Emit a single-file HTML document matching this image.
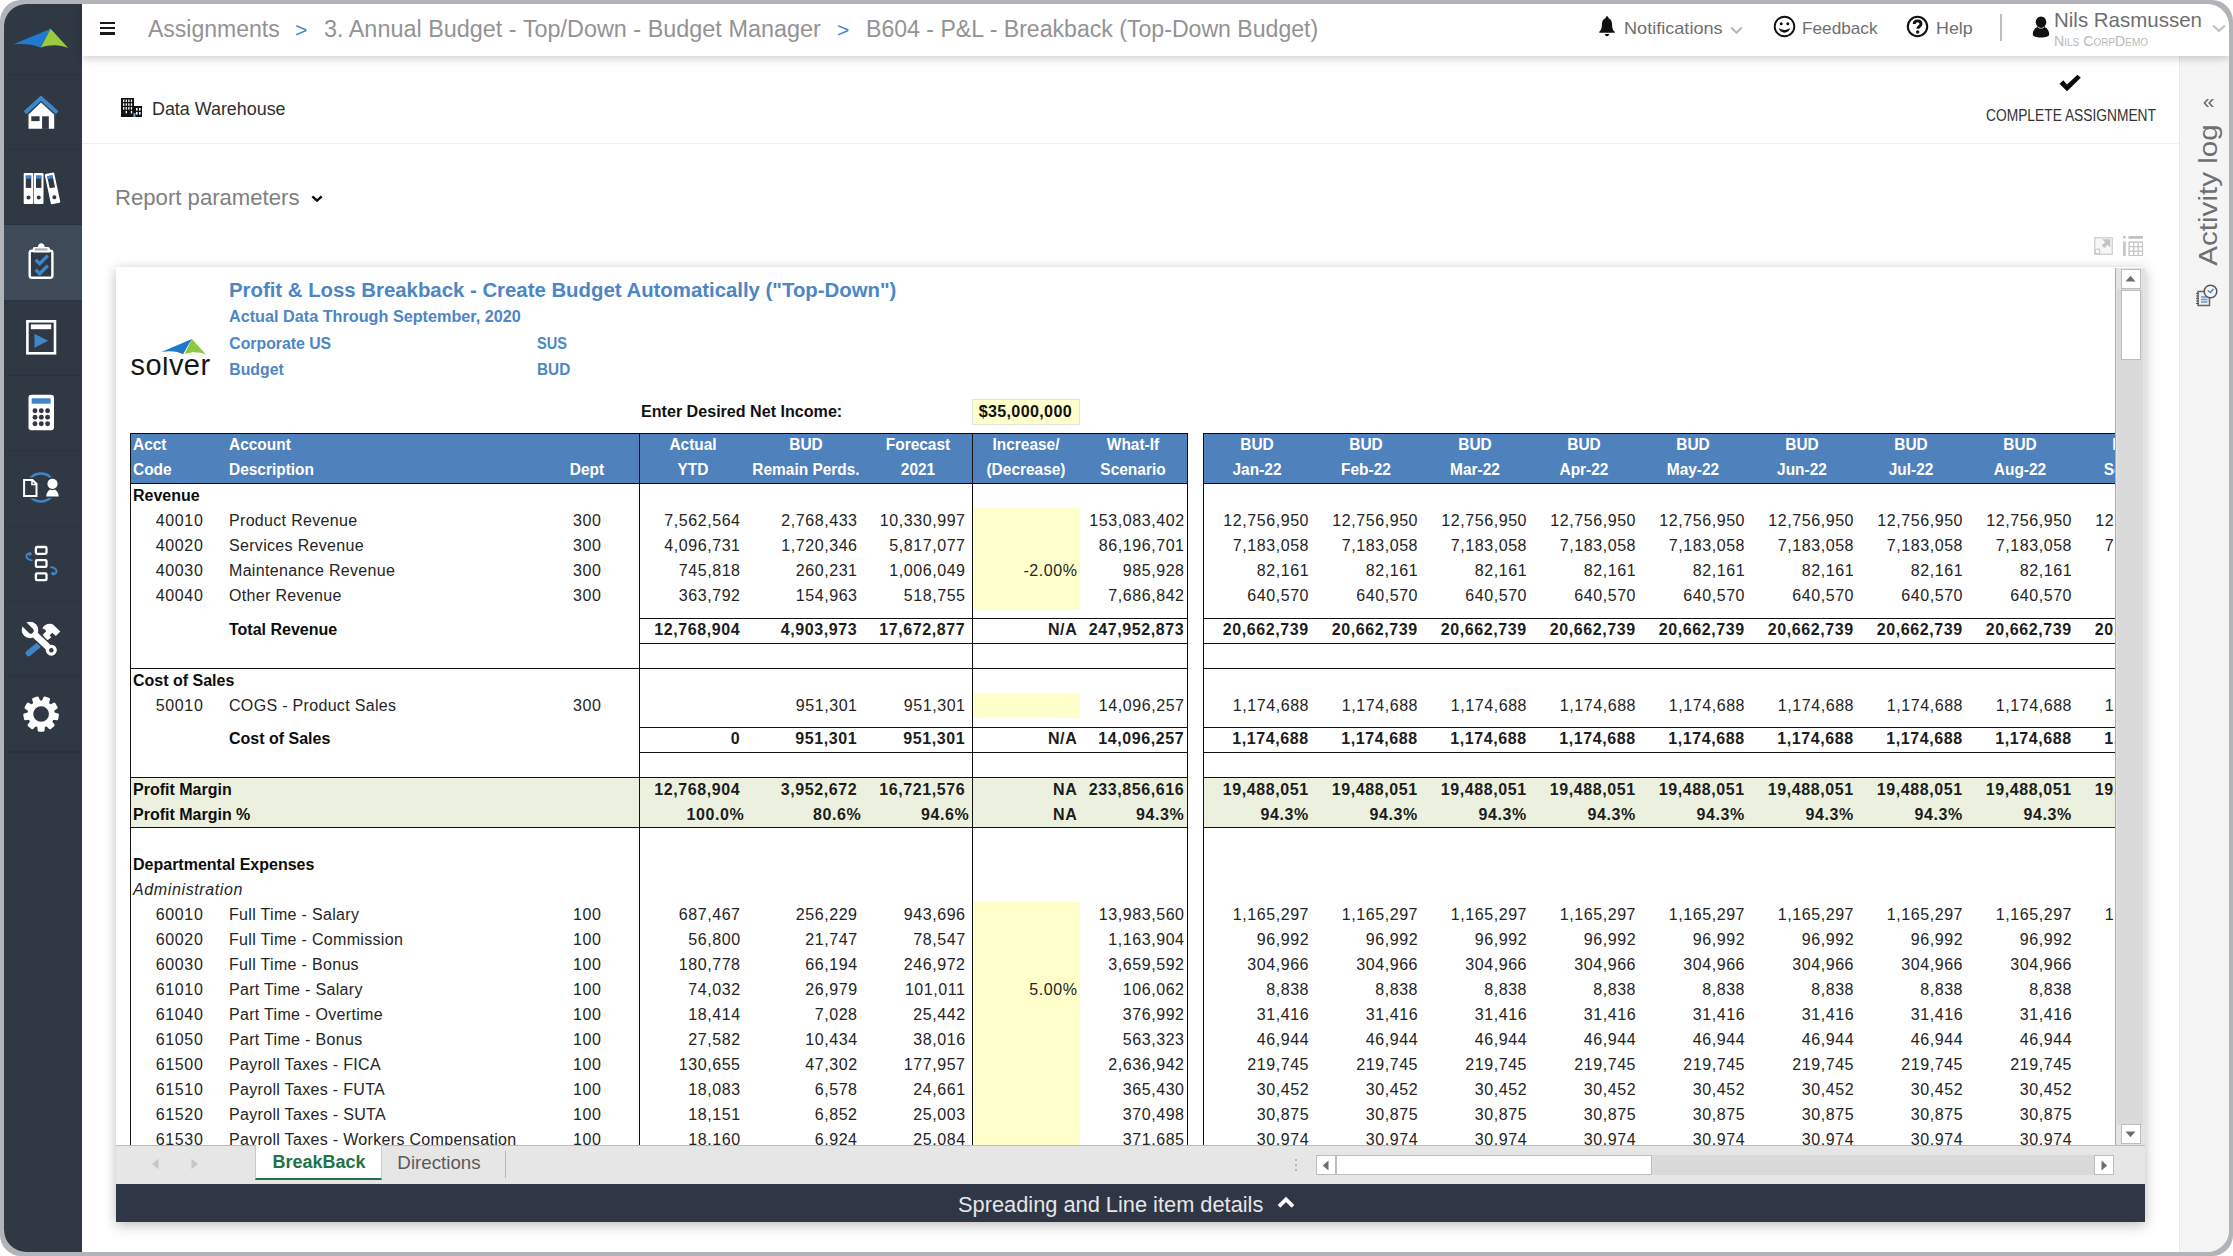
<!DOCTYPE html>
<html lang="en"><head><meta charset="utf-8"><title>B604 - P&amp;L - Breakback (Top-Down Budget)</title>
<style>
html,body{margin:0;padding:0;background:#fff;}
body{width:2233px;height:1256px;position:relative;overflow:hidden;font-family:"Liberation Sans",sans-serif;}
.a{position:absolute;box-sizing:border-box;}
.t{white-space:pre;}
#frame{left:0;top:0;width:2233px;height:1256px;border-radius:21px;background:#b1b4b9;}
#clip{left:4px;top:4px;width:2225px;height:1248px;border-radius:22px;background:#fff;overflow:hidden;}
#in{left:-4px;top:-4px;width:2233px;height:1256px;}
svg{position:absolute;overflow:visible;}
</style></head><body>
<div class="a" id="frame"><div class="a" id="clip"><div class="a" id="in">

<div class="a" style="left:4px;top:4px;width:78px;height:1248px;background:#2f3843;"></div>
<div class="a" style="left:4px;top:225.3px;width:78px;height:74.6px;background:#3e4a58;"></div>
<div class="a" style="left:4px;top:73.7px;width:78px;height:1.2px;background:#2b333d;"></div>
<div class="a" style="left:4px;top:149px;width:78px;height:1.2px;background:#2b333d;"></div>
<div class="a" style="left:4px;top:224.3px;width:78px;height:1.2px;background:#2b333d;"></div>
<div class="a" style="left:4px;top:299.6px;width:78px;height:1.2px;background:#2b333d;"></div>
<div class="a" style="left:4px;top:374.9px;width:78px;height:1.2px;background:#2b333d;"></div>
<div class="a" style="left:4px;top:450.2px;width:78px;height:1.2px;background:#2b333d;"></div>
<div class="a" style="left:4px;top:525.5px;width:78px;height:1.2px;background:#2b333d;"></div>
<div class="a" style="left:4px;top:600.8px;width:78px;height:1.2px;background:#2b333d;"></div>
<div class="a" style="left:4px;top:676.1px;width:78px;height:1.2px;background:#2b333d;"></div>
<div class="a" style="left:4px;top:751.4px;width:78px;height:1.2px;background:#2b333d;"></div>
<div class="a" style="left:2179px;top:56px;width:50px;height:1196px;background:#f5f5f5;border-left:1px solid #e9e9e9;"></div>
<div class="a" style="left:82px;top:143px;width:2097px;height:1px;background:#efefef;"></div>
<div class="a" style="left:82px;top:4px;width:2147px;height:52px;background:#fff;box-shadow:0 2px 9px rgba(0,0,0,0.22);"></div>
<div class="a" style="left:100px;top:21.5px;width:14.5px;height:2.7px;background:#1a1a1a;"></div>
<div class="a" style="left:100px;top:26.8px;width:14.5px;height:2.7px;background:#1a1a1a;"></div>
<div class="a" style="left:100px;top:32.1px;width:14.5px;height:2.7px;background:#1a1a1a;"></div>
<div class="a t " style="top:14.0px;font-size:23px;line-height:30px;color:#939393;left:148.00px;">Assignments</div>
<div class="a t " style="top:15.5px;font-size:21px;line-height:27px;color:#3a87d6;letter-spacing:0px;left:295.00px;">&gt;</div>
<div class="a t " style="top:14.0px;font-size:23px;line-height:30px;color:#939393;left:323.50px;transform:scaleX(1.018);transform-origin:left center;">3. Annual Budget - Top/Down - Budget Manager</div>
<div class="a t " style="top:15.5px;font-size:21px;line-height:27px;color:#3a87d6;left:837.00px;">&gt;</div>
<div class="a t " style="top:14.0px;font-size:23px;line-height:30px;color:#939393;left:865.50px;transform:scaleX(1.004);transform-origin:left center;">B604 - P&amp;L - Breakback (Top-Down Budget)</div>
<div class="a t " style="top:18.2px;font-size:17px;line-height:22px;color:#6f6f6f;left:1623.60px;transform:scaleX(1.065);transform-origin:left center;">Notifications</div>
<div class="a t " style="top:18.2px;font-size:17px;line-height:22px;color:#6f6f6f;left:1801.50px;transform:scaleX(1.012);transform-origin:left center;">Feedback</div>
<div class="a t " style="top:18.2px;font-size:17px;line-height:22px;color:#6f6f6f;left:1935.50px;transform:scaleX(1.05);transform-origin:left center;">Help</div>
<div class="a" style="left:2000px;top:14px;width:1.5px;height:27px;background:#bdbdbd;"></div>
<div class="a t " style="top:6.1px;font-size:21px;line-height:27px;color:#6f6f6f;left:2054.00px;transform:scaleX(0.975);transform-origin:left center;">Nils Rasmussen</div>
<div class="a t " style="top:31.5px;font-size:14.2px;line-height:18px;color:#b9b9b9;left:2054.00px;transform:scaleX(1.0);transform-origin:left center;"><span style="font-variant:small-caps">Nils CorpDemo</span></div>
<svg style="left:1597.500px;top:15px" width="18" height="23" viewBox="0 0 20 24" preserveAspectRatio="none"><path d="M10 1.2c-.9 0-1.5.7-1.5 1.5v.5C5.8 4 4.4 6.6 4.4 9.6c0 4.6-1.4 6.5-3 8v1h17.2v-1c-1.600-1.500-3-3.400-3-8 0-3-1.400-5.600-4.100-6.400v-.5c0-.8-.6-1.500-1.500-1.500zM7.600 19.800c0 1.300 1.100 2.400 2.400 2.400s2.400-1.100 2.400-2.400z" fill="#111"/></svg>
<svg style="left:1730px;top:26px" width="13" height="9" viewBox="0 0 13 9"><path d="M1.200 1.500l5.300 5.300 5.300-5.300" fill="none" stroke="#b9b9b9" stroke-width="2.200"/></svg>
<svg style="left:1773px;top:15px" width="23" height="23" viewBox="0 0 23 23"><circle cx="11.500" cy="11.500" r="9.800" fill="none" stroke="#111" stroke-width="1.900"/><circle cx="8.200" cy="8.800" r="1.500" fill="#111"/><circle cx="14.800" cy="8.800" r="1.500" fill="#111"/><path d="M5.600 12.800c1.100 3.300 3.300 4.900 5.900 4.900s4.800-1.600 5.900-4.900c-1.800 1.500-3.700 2.100-5.900 2.100s-4.100-.6-5.900-2.100z" fill="#111"/></svg>
<svg style="left:1906px;top:15px" width="23" height="23" viewBox="0 0 23 23"><circle cx="11.500" cy="11.500" r="9.700" fill="none" stroke="#111" stroke-width="2.100"/><path d="M8.200 9.100c0-2 1.500-3.200 3.400-3.200 2 0 3.400 1.200 3.400 3 0 2.300-3.200 2.500-3.200 4.900" fill="none" stroke="#111" stroke-width="2.900"/><circle cx="11.700" cy="17" r="1.700" fill="#111"/></svg>
<svg style="left:2032px;top:16px" width="18" height="22" viewBox="0 0 18 22"><ellipse cx="9" cy="6.200" rx="5.300" ry="5.800" fill="#111"/><path d="M.8 18.500c0-4.500 3-7 4.800-7.400.8 1 2 1.500 3.400 1.500s2.600-.5 3.400-1.500c1.800.4 4.800 2.900 4.800 7.400 0 1.800-3.500 3-8.200 3s-8.200-1.200-8.200-3z" fill="#111"/></svg>
<svg style="left:2212px;top:24px" width="14" height="9" viewBox="0 0 14 9"><path d="M1.200 1.500l5.800 5.500 5.800-5.500" fill="none" stroke="#c4c4c4" stroke-width="2.300"/></svg>
<svg style="left:121px;top:98px" width="21" height="19" viewBox="0 0 21 19"><path d="M0 0h13v8h8v11H0z" fill="#111"/><g fill="#fff"><rect x="2" y="1.500" width="1.300" height="2.500"/><rect x="4.600" y="1.500" width="1.300" height="2.500"/><rect x="7.200" y="1.500" width="1.300" height="2.500"/><rect x="9.800" y="1.500" width="1.300" height="2.500"/><rect x="2" y="5.300" width="1.300" height="2.500"/><rect x="4.600" y="5.300" width="1.300" height="2.500"/><rect x="7.200" y="5.300" width="1.300" height="2.500"/><rect x="9.800" y="5.300" width="1.300" height="2.500"/><rect x="2" y="9.100" width="1.300" height="2.500"/><rect x="4.600" y="9.100" width="1.300" height="2.500"/><rect x="7.200" y="9.100" width="1.300" height="2.500"/><rect x="9.800" y="9.100" width="1.300" height="2.500"/><rect x="15" y="10" width="1.600" height="2.600"/><rect x="18" y="10" width="1.600" height="2.600"/><rect x="15" y="14" width="1.600" height="2.600"/><rect x="18" y="14" width="1.600" height="2.600"/><rect x="4.600" y="12.900" width="1.300" height="2.500"/><rect x="9.800" y="12.900" width="1.300" height="2.500"/></g><rect x="12.300" y="15" width="2.200" height="4" fill="#5b9bd5"/></svg>
<div class="a t " style="top:97.5px;font-size:17.5px;line-height:23px;color:#2e2e2e;left:151.60px;transform:scaleX(1.022);transform-origin:left center;">Data Warehouse</div>
<svg style="left:2058px;top:74px" width="24" height="18" viewBox="0 0 24 18"><path d="M1.500 9.800l3.800-3.500 3.700 4.200L19.500.8l3.300 3L9 17.300z" fill="#0b0b0b"/></svg>
<div class="a t " style="top:104.5px;font-size:16.3px;line-height:21px;color:#333;left:1570.50px;width:1000px;text-align:center;transform:scaleX(0.846);transform-origin:center center;">COMPLETE ASSIGNMENT</div>
<div class="a t " style="top:182.8px;font-size:22px;line-height:29px;color:#7f7f7f;left:115.30px;transform:scaleX(1.006);transform-origin:left center;">Report parameters</div>
<svg style="left:311px;top:195px" width="12" height="8" viewBox="0 0 12 8"><path d="M1.300 1.300l4.700 4.400 4.700-4.400" fill="none" stroke="#111" stroke-width="2.400"/></svg>
<div class="a t " style="top:86.5px;font-size:21px;line-height:27px;color:#666;left:1708.50px;width:1000px;text-align:center;">&laquo;</div>
<div class="a t" style="left:2208px;top:195px;width:0;height:0;"><div class="a t" style="left:-100px;top:-17px;width:200px;text-align:center;font-size:25.5px;line-height:34px;color:#707070;transform:rotate(-90deg) scaleX(1.16);transform-origin:center center;">Activity log</div></div>
<svg style="left:2195px;top:283px" width="24" height="24" viewBox="0 0 24 24"><path d="M3 8.500h11.500v14H3z" fill="#f1f1f1" stroke="#666" stroke-width="1.500"/><path d="M1 10.500h3M1 13h3M1 15.500h3M1 18h3M1 20.500h3" stroke="#555" stroke-width="1.100"/><path d="M6 14h6.500M6 16.500h6.500M6 19h6.500" stroke="#5b9bd5" stroke-width="1.300"/><circle cx="15.500" cy="8.500" r="6.300" fill="#f7f7f7" stroke="#555" stroke-width="1.500"/><path d="M12.800 7.500l2.700 2 3-3.500" fill="none" stroke="#3a87d6" stroke-width="1.500"/></svg>
<svg style="left:2094px;top:237px" width="19" height="18" viewBox="0 0 19 18"><rect x=".7" y=".7" width="17.600" height="16.600" fill="#f6f6f6" stroke="#d2d2d2" stroke-width="1.400"/><rect x="1.400" y="12.300" width="4.200" height="4.200" fill="#fff" stroke="#cdcdcd" stroke-width="1.200"/><path d="M16.300 2.200v8.300l-2.800-2.800-3.200 3.200-2.400-2.400 3.200-3.200L8.300 2.200z" fill="#c3c3c3"/></svg>
<svg style="left:2123px;top:236px" width="20" height="20" viewBox="0 0 20 20"><rect x="0" y="0" width="2.600" height="2.600" fill="#c8c8c8"/><rect x="5.400" y="0" width="14.600" height="2.800" fill="#c2c2c2"/><rect x="0" y="5.400" width="2.800" height="14.600" fill="#c8c8c8"/><rect x="5.400" y="5.400" width="14.600" height="14.600" fill="#c6c6c6"/><g fill="#fff"><rect x="6.800" y="6.800" width="3.200" height="3.200"/><rect x="11.300" y="6.800" width="3.200" height="3.200"/><rect x="15.800" y="6.800" width="3.200" height="3.200"/><rect x="6.800" y="11.300" width="3.200" height="3.200"/><rect x="11.300" y="11.300" width="3.200" height="3.200"/><rect x="15.800" y="11.300" width="3.200" height="3.200"/><rect x="6.800" y="15.800" width="3.200" height="3.200"/><rect x="11.300" y="15.800" width="3.200" height="3.200"/><rect x="15.800" y="15.800" width="3.200" height="3.200"/></g></svg>
<div class="a" style="left:116px;top:267px;width:2029px;height:955px;background:#fff;box-shadow:0 3px 12px rgba(0,0,0,0.27);"></div>
<div class="a" id="sheet" style="left:116px;top:268px;width:1999px;height:877px;overflow:hidden;background:#fff;"><div class="a" style="left:-116px;top:-268px;width:2233px;height:1256px;">
<div class="a t " style="top:276.1px;font-size:20.7px;line-height:27px;color:#4c86c6;font-weight:700;left:229.30px;transform:scaleX(0.984);transform-origin:left center;">Profit &amp; Loss Breakback - Create Budget Automatically ("Top-Down")</div>
<div class="a t " style="top:306.4px;font-size:15.8px;line-height:21px;color:#4c86c6;font-weight:700;left:229.30px;transform:scaleX(1.026);transform-origin:left center;">Actual Data Through September, 2020</div>
<div class="a t " style="top:332.9px;font-size:15.8px;line-height:21px;color:#4c86c6;font-weight:700;left:229.30px;transform:scaleX(1.0);transform-origin:left center;">Corporate US</div>
<div class="a t " style="top:332.9px;font-size:15.8px;line-height:21px;color:#4c86c6;font-weight:700;left:537.00px;transform:scaleX(0.92);transform-origin:left center;">SUS</div>
<div class="a t " style="top:359.3px;font-size:15.8px;line-height:21px;color:#4c86c6;font-weight:700;left:229.30px;transform:scaleX(1.0);transform-origin:left center;">Budget</div>
<div class="a t " style="top:359.3px;font-size:15.8px;line-height:21px;color:#4c86c6;font-weight:700;left:537.00px;transform:scaleX(0.97);transform-origin:left center;">BUD</div>
<svg style="left:0px;top:0px" width="230" height="400" viewBox="0 0 230 400"><path d="M161.400 352L191.900 339 183 354.200C177.500 350.800 169 350.600 161.400 352z" fill="#1f78c8"/><path d="M191.900 339L206 354.600C199 351.600 192 351.600 184.800 354.100z" fill="#8dc63f"/></svg>
<div class="a" style="left:125px;top:357.300px;width:95px;height:30px;overflow:hidden;"><div class="a t" style="left:5.500px;top:-11.100px;font-size:29px;line-height:38px;color:#161616;letter-spacing:0.45px;">solver</div></div>
<div class="a t " style="top:401.0px;font-size:16.1px;line-height:21px;color:#111;font-weight:700;left:641.00px;">Enter Desired Net Income:</div>
<div class="a" style="left:972px;top:399px;width:108px;height:26px;background:#ffffcc;border:1px solid #dfe3e6;"></div>
<div class="a t " style="top:401.0px;font-size:16.1px;line-height:21px;color:#111;font-weight:700;letter-spacing:0.35px;right:1161.00px;">$35,000,000</div>
<div class="a" style="left:130px;top:433px;width:1058px;height:51px;background:#4f81bd;"></div>
<div class="a" style="left:1203px;top:433px;width:1030px;height:51px;background:#4f81bd;"></div>
<div class="a" style="left:130px;top:777px;width:1058px;height:50px;background:#ebf1de;"></div>
<div class="a" style="left:1203px;top:777px;width:1030px;height:50px;background:#ebf1de;"></div>
<div class="a" style="left:973px;top:508px;width:107px;height:102px;background:#ffffcc;"></div>
<div class="a" style="left:973px;top:693px;width:107px;height:25px;background:#ffffcc;"></div>
<div class="a" style="left:973px;top:902px;width:107px;height:260px;background:#ffffcc;"></div>
<div class="a" style="left:130px;top:433px;width:1058px;height:1.4px;background:#0a0a0a;"></div>
<div class="a" style="left:1203px;top:433px;width:1030px;height:1.4px;background:#0a0a0a;"></div>
<div class="a" style="left:130px;top:483px;width:1058px;height:1.4px;background:#0a0a0a;"></div>
<div class="a" style="left:1203px;top:483px;width:1030px;height:1.4px;background:#0a0a0a;"></div>
<div class="a" style="left:639px;top:618px;width:549px;height:1.3px;background:#111;"></div>
<div class="a" style="left:1203px;top:618px;width:1030px;height:1.3px;background:#111;"></div>
<div class="a" style="left:639px;top:643px;width:549px;height:1.3px;background:#111;"></div>
<div class="a" style="left:1203px;top:643px;width:1030px;height:1.3px;background:#111;"></div>
<div class="a" style="left:639px;top:727px;width:549px;height:1.3px;background:#111;"></div>
<div class="a" style="left:1203px;top:727px;width:1030px;height:1.3px;background:#111;"></div>
<div class="a" style="left:639px;top:752px;width:549px;height:1.3px;background:#111;"></div>
<div class="a" style="left:1203px;top:752px;width:1030px;height:1.3px;background:#111;"></div>
<div class="a" style="left:130px;top:668px;width:1058px;height:1.3px;background:#111;"></div>
<div class="a" style="left:1203px;top:668px;width:1030px;height:1.3px;background:#111;"></div>
<div class="a" style="left:130px;top:777px;width:1058px;height:1.3px;background:#111;"></div>
<div class="a" style="left:1203px;top:777px;width:1030px;height:1.3px;background:#111;"></div>
<div class="a" style="left:130px;top:827px;width:1058px;height:1.3px;background:#111;"></div>
<div class="a" style="left:1203px;top:827px;width:1030px;height:1.3px;background:#111;"></div>
<div class="a" style="left:130px;top:433px;width:1.4px;height:730px;background:#111;"></div>
<div class="a" style="left:639px;top:433px;width:1.4px;height:730px;background:#111;"></div>
<div class="a" style="left:972px;top:433px;width:1.4px;height:730px;background:#111;"></div>
<div class="a" style="left:1187px;top:433px;width:1.4px;height:730px;background:#111;"></div>
<div class="a" style="left:1203px;top:433px;width:1.4px;height:730px;background:#111;"></div>
<div class="a t " style="top:435.4px;font-size:15.7px;line-height:20px;color:#fff;font-weight:700;left:132.50px;transform:scaleX(0.985);transform-origin:left center;">Acct</div>
<div class="a t " style="top:460.4px;font-size:15.7px;line-height:20px;color:#fff;font-weight:700;left:132.50px;transform:scaleX(0.985);transform-origin:left center;">Code</div>
<div class="a t " style="top:435.4px;font-size:15.7px;line-height:20px;color:#fff;font-weight:700;left:229.00px;transform:scaleX(0.985);transform-origin:left center;">Account</div>
<div class="a t " style="top:460.4px;font-size:15.7px;line-height:20px;color:#fff;font-weight:700;left:229.00px;transform:scaleX(0.985);transform-origin:left center;">Description</div>
<div class="a t " style="top:460.4px;font-size:15.7px;line-height:20px;color:#fff;font-weight:700;left:87.00px;width:1000px;text-align:center;transform:scaleX(0.985);transform-origin:center center;">Dept</div>
<div class="a t " style="top:435.4px;font-size:15.7px;line-height:20px;color:#fff;font-weight:700;left:192.50px;width:1000px;text-align:center;transform:scaleX(0.985);transform-origin:center center;">Actual</div>
<div class="a t " style="top:460.4px;font-size:15.7px;line-height:20px;color:#fff;font-weight:700;left:192.50px;width:1000px;text-align:center;transform:scaleX(0.985);transform-origin:center center;">YTD</div>
<div class="a t " style="top:435.4px;font-size:15.7px;line-height:20px;color:#fff;font-weight:700;left:305.50px;width:1000px;text-align:center;transform:scaleX(0.985);transform-origin:center center;">BUD</div>
<div class="a t " style="top:460.4px;font-size:15.7px;line-height:20px;color:#fff;font-weight:700;left:305.50px;width:1000px;text-align:center;transform:scaleX(0.985);transform-origin:center center;">Remain Perds.</div>
<div class="a t " style="top:435.4px;font-size:15.7px;line-height:20px;color:#fff;font-weight:700;left:417.50px;width:1000px;text-align:center;transform:scaleX(0.985);transform-origin:center center;">Forecast</div>
<div class="a t " style="top:460.4px;font-size:15.7px;line-height:20px;color:#fff;font-weight:700;left:417.50px;width:1000px;text-align:center;transform:scaleX(0.985);transform-origin:center center;">2021</div>
<div class="a t " style="top:435.4px;font-size:15.7px;line-height:20px;color:#fff;font-weight:700;left:525.50px;width:1000px;text-align:center;transform:scaleX(0.985);transform-origin:center center;">Increase/</div>
<div class="a t " style="top:460.4px;font-size:15.7px;line-height:20px;color:#fff;font-weight:700;left:525.50px;width:1000px;text-align:center;transform:scaleX(0.985);transform-origin:center center;">(Decrease)</div>
<div class="a t " style="top:435.4px;font-size:15.7px;line-height:20px;color:#fff;font-weight:700;left:633.00px;width:1000px;text-align:center;transform:scaleX(0.985);transform-origin:center center;">What-If</div>
<div class="a t " style="top:460.4px;font-size:15.7px;line-height:20px;color:#fff;font-weight:700;left:633.00px;width:1000px;text-align:center;transform:scaleX(0.985);transform-origin:center center;">Scenario</div>
<div class="a t " style="top:435.4px;font-size:15.7px;line-height:20px;color:#fff;font-weight:700;left:757.00px;width:1000px;text-align:center;transform:scaleX(0.985);transform-origin:center center;">BUD</div>
<div class="a t " style="top:460.4px;font-size:15.7px;line-height:20px;color:#fff;font-weight:700;left:757.00px;width:1000px;text-align:center;transform:scaleX(0.985);transform-origin:center center;">Jan-22</div>
<div class="a t " style="top:435.4px;font-size:15.7px;line-height:20px;color:#fff;font-weight:700;left:866.00px;width:1000px;text-align:center;transform:scaleX(0.985);transform-origin:center center;">BUD</div>
<div class="a t " style="top:460.4px;font-size:15.7px;line-height:20px;color:#fff;font-weight:700;left:866.00px;width:1000px;text-align:center;transform:scaleX(0.985);transform-origin:center center;">Feb-22</div>
<div class="a t " style="top:435.4px;font-size:15.7px;line-height:20px;color:#fff;font-weight:700;left:975.00px;width:1000px;text-align:center;transform:scaleX(0.985);transform-origin:center center;">BUD</div>
<div class="a t " style="top:460.4px;font-size:15.7px;line-height:20px;color:#fff;font-weight:700;left:975.00px;width:1000px;text-align:center;transform:scaleX(0.985);transform-origin:center center;">Mar-22</div>
<div class="a t " style="top:435.4px;font-size:15.7px;line-height:20px;color:#fff;font-weight:700;left:1084.00px;width:1000px;text-align:center;transform:scaleX(0.985);transform-origin:center center;">BUD</div>
<div class="a t " style="top:460.4px;font-size:15.7px;line-height:20px;color:#fff;font-weight:700;left:1084.00px;width:1000px;text-align:center;transform:scaleX(0.985);transform-origin:center center;">Apr-22</div>
<div class="a t " style="top:435.4px;font-size:15.7px;line-height:20px;color:#fff;font-weight:700;left:1193.00px;width:1000px;text-align:center;transform:scaleX(0.985);transform-origin:center center;">BUD</div>
<div class="a t " style="top:460.4px;font-size:15.7px;line-height:20px;color:#fff;font-weight:700;left:1193.00px;width:1000px;text-align:center;transform:scaleX(0.985);transform-origin:center center;">May-22</div>
<div class="a t " style="top:435.4px;font-size:15.7px;line-height:20px;color:#fff;font-weight:700;left:1302.00px;width:1000px;text-align:center;transform:scaleX(0.985);transform-origin:center center;">BUD</div>
<div class="a t " style="top:460.4px;font-size:15.7px;line-height:20px;color:#fff;font-weight:700;left:1302.00px;width:1000px;text-align:center;transform:scaleX(0.985);transform-origin:center center;">Jun-22</div>
<div class="a t " style="top:435.4px;font-size:15.7px;line-height:20px;color:#fff;font-weight:700;left:1411.00px;width:1000px;text-align:center;transform:scaleX(0.985);transform-origin:center center;">BUD</div>
<div class="a t " style="top:460.4px;font-size:15.7px;line-height:20px;color:#fff;font-weight:700;left:1411.00px;width:1000px;text-align:center;transform:scaleX(0.985);transform-origin:center center;">Jul-22</div>
<div class="a t " style="top:435.4px;font-size:15.7px;line-height:20px;color:#fff;font-weight:700;left:1520.00px;width:1000px;text-align:center;transform:scaleX(0.985);transform-origin:center center;">BUD</div>
<div class="a t " style="top:460.4px;font-size:15.7px;line-height:20px;color:#fff;font-weight:700;left:1520.00px;width:1000px;text-align:center;transform:scaleX(0.985);transform-origin:center center;">Aug-22</div>
<div class="a t " style="top:435.4px;font-size:15.7px;line-height:20px;color:#fff;font-weight:700;left:1629.00px;width:1000px;text-align:center;transform:scaleX(0.985);transform-origin:center center;">BUD</div>
<div class="a t " style="top:460.4px;font-size:15.7px;line-height:20px;color:#fff;font-weight:700;left:1629.00px;width:1000px;text-align:center;transform:scaleX(0.985);transform-origin:center center;">Sep-22</div>
<div class="a t " style="top:484.9px;font-size:16.0px;line-height:21px;color:#0c0c0c;font-weight:700;left:133.00px;">Revenue</div>
<div class="a t " style="top:509.9px;font-size:16.0px;line-height:21px;color:#242424;letter-spacing:0.62px;right:2029.60px;">40010</div>
<div class="a t " style="top:509.9px;font-size:16.0px;line-height:21px;color:#242424;letter-spacing:0.32px;left:229.00px;">Product Revenue</div>
<div class="a t " style="top:509.9px;font-size:16.0px;line-height:21px;color:#242424;letter-spacing:0.6px;left:87.30px;width:1000px;text-align:center;">300</div>
<div class="a t " style="top:509.9px;font-size:16.0px;line-height:21px;color:#242424;letter-spacing:0.58px;right:1492.40px;">7,562,564</div>
<div class="a t " style="top:509.9px;font-size:16.0px;line-height:21px;color:#242424;letter-spacing:0.58px;right:1375.40px;">2,768,433</div>
<div class="a t " style="top:509.9px;font-size:16.0px;line-height:21px;color:#242424;letter-spacing:0.58px;right:1267.40px;">10,330,997</div>
<div class="a t " style="top:509.9px;font-size:16.0px;line-height:21px;color:#242424;letter-spacing:0.58px;right:1048.40px;">153,083,402</div>
<div class="a t " style="top:509.9px;font-size:16.0px;line-height:21px;color:#242424;letter-spacing:0.58px;right:923.90px;">12,756,950</div>
<div class="a t " style="top:509.9px;font-size:16.0px;line-height:21px;color:#242424;letter-spacing:0.58px;right:814.90px;">12,756,950</div>
<div class="a t " style="top:509.9px;font-size:16.0px;line-height:21px;color:#242424;letter-spacing:0.58px;right:705.90px;">12,756,950</div>
<div class="a t " style="top:509.9px;font-size:16.0px;line-height:21px;color:#242424;letter-spacing:0.58px;right:596.90px;">12,756,950</div>
<div class="a t " style="top:509.9px;font-size:16.0px;line-height:21px;color:#242424;letter-spacing:0.58px;right:487.90px;">12,756,950</div>
<div class="a t " style="top:509.9px;font-size:16.0px;line-height:21px;color:#242424;letter-spacing:0.58px;right:378.90px;">12,756,950</div>
<div class="a t " style="top:509.9px;font-size:16.0px;line-height:21px;color:#242424;letter-spacing:0.58px;right:269.90px;">12,756,950</div>
<div class="a t " style="top:509.9px;font-size:16.0px;line-height:21px;color:#242424;letter-spacing:0.58px;right:160.90px;">12,756,950</div>
<div class="a t " style="top:509.9px;font-size:16.0px;line-height:21px;color:#242424;letter-spacing:0.58px;right:51.90px;">12,756,950</div>
<div class="a t " style="top:534.9px;font-size:16.0px;line-height:21px;color:#242424;letter-spacing:0.62px;right:2029.60px;">40020</div>
<div class="a t " style="top:534.9px;font-size:16.0px;line-height:21px;color:#242424;letter-spacing:0.32px;left:229.00px;">Services Revenue</div>
<div class="a t " style="top:534.9px;font-size:16.0px;line-height:21px;color:#242424;letter-spacing:0.6px;left:87.30px;width:1000px;text-align:center;">300</div>
<div class="a t " style="top:534.9px;font-size:16.0px;line-height:21px;color:#242424;letter-spacing:0.58px;right:1492.40px;">4,096,731</div>
<div class="a t " style="top:534.9px;font-size:16.0px;line-height:21px;color:#242424;letter-spacing:0.58px;right:1375.40px;">1,720,346</div>
<div class="a t " style="top:534.9px;font-size:16.0px;line-height:21px;color:#242424;letter-spacing:0.58px;right:1267.40px;">5,817,077</div>
<div class="a t " style="top:534.9px;font-size:16.0px;line-height:21px;color:#242424;letter-spacing:0.58px;right:1048.40px;">86,196,701</div>
<div class="a t " style="top:534.9px;font-size:16.0px;line-height:21px;color:#242424;letter-spacing:0.58px;right:923.90px;">7,183,058</div>
<div class="a t " style="top:534.9px;font-size:16.0px;line-height:21px;color:#242424;letter-spacing:0.58px;right:814.90px;">7,183,058</div>
<div class="a t " style="top:534.9px;font-size:16.0px;line-height:21px;color:#242424;letter-spacing:0.58px;right:705.90px;">7,183,058</div>
<div class="a t " style="top:534.9px;font-size:16.0px;line-height:21px;color:#242424;letter-spacing:0.58px;right:596.90px;">7,183,058</div>
<div class="a t " style="top:534.9px;font-size:16.0px;line-height:21px;color:#242424;letter-spacing:0.58px;right:487.90px;">7,183,058</div>
<div class="a t " style="top:534.9px;font-size:16.0px;line-height:21px;color:#242424;letter-spacing:0.58px;right:378.90px;">7,183,058</div>
<div class="a t " style="top:534.9px;font-size:16.0px;line-height:21px;color:#242424;letter-spacing:0.58px;right:269.90px;">7,183,058</div>
<div class="a t " style="top:534.9px;font-size:16.0px;line-height:21px;color:#242424;letter-spacing:0.58px;right:160.90px;">7,183,058</div>
<div class="a t " style="top:534.9px;font-size:16.0px;line-height:21px;color:#242424;letter-spacing:0.58px;right:51.90px;">7,183,058</div>
<div class="a t " style="top:559.9px;font-size:16.0px;line-height:21px;color:#242424;letter-spacing:0.62px;right:2029.60px;">40030</div>
<div class="a t " style="top:559.9px;font-size:16.0px;line-height:21px;color:#242424;letter-spacing:0.32px;left:229.00px;">Maintenance Revenue</div>
<div class="a t " style="top:559.9px;font-size:16.0px;line-height:21px;color:#242424;letter-spacing:0.6px;left:87.30px;width:1000px;text-align:center;">300</div>
<div class="a t " style="top:559.9px;font-size:16.0px;line-height:21px;color:#242424;letter-spacing:0.58px;right:1492.40px;">745,818</div>
<div class="a t " style="top:559.9px;font-size:16.0px;line-height:21px;color:#242424;letter-spacing:0.58px;right:1375.40px;">260,231</div>
<div class="a t " style="top:559.9px;font-size:16.0px;line-height:21px;color:#242424;letter-spacing:0.58px;right:1267.40px;">1,006,049</div>
<div class="a t " style="top:559.9px;font-size:16.0px;line-height:21px;color:#242424;letter-spacing:0.58px;right:1155.40px;">-2.00%</div>
<div class="a t " style="top:559.9px;font-size:16.0px;line-height:21px;color:#242424;letter-spacing:0.58px;right:1048.40px;">985,928</div>
<div class="a t " style="top:559.9px;font-size:16.0px;line-height:21px;color:#242424;letter-spacing:0.58px;right:923.90px;">82,161</div>
<div class="a t " style="top:559.9px;font-size:16.0px;line-height:21px;color:#242424;letter-spacing:0.58px;right:814.90px;">82,161</div>
<div class="a t " style="top:559.9px;font-size:16.0px;line-height:21px;color:#242424;letter-spacing:0.58px;right:705.90px;">82,161</div>
<div class="a t " style="top:559.9px;font-size:16.0px;line-height:21px;color:#242424;letter-spacing:0.58px;right:596.90px;">82,161</div>
<div class="a t " style="top:559.9px;font-size:16.0px;line-height:21px;color:#242424;letter-spacing:0.58px;right:487.90px;">82,161</div>
<div class="a t " style="top:559.9px;font-size:16.0px;line-height:21px;color:#242424;letter-spacing:0.58px;right:378.90px;">82,161</div>
<div class="a t " style="top:559.9px;font-size:16.0px;line-height:21px;color:#242424;letter-spacing:0.58px;right:269.90px;">82,161</div>
<div class="a t " style="top:559.9px;font-size:16.0px;line-height:21px;color:#242424;letter-spacing:0.58px;right:160.90px;">82,161</div>
<div class="a t " style="top:559.9px;font-size:16.0px;line-height:21px;color:#242424;letter-spacing:0.58px;right:51.90px;">82,161</div>
<div class="a t " style="top:584.9px;font-size:16.0px;line-height:21px;color:#242424;letter-spacing:0.62px;right:2029.60px;">40040</div>
<div class="a t " style="top:584.9px;font-size:16.0px;line-height:21px;color:#242424;letter-spacing:0.32px;left:229.00px;">Other Revenue</div>
<div class="a t " style="top:584.9px;font-size:16.0px;line-height:21px;color:#242424;letter-spacing:0.6px;left:87.30px;width:1000px;text-align:center;">300</div>
<div class="a t " style="top:584.9px;font-size:16.0px;line-height:21px;color:#242424;letter-spacing:0.58px;right:1492.40px;">363,792</div>
<div class="a t " style="top:584.9px;font-size:16.0px;line-height:21px;color:#242424;letter-spacing:0.58px;right:1375.40px;">154,963</div>
<div class="a t " style="top:584.9px;font-size:16.0px;line-height:21px;color:#242424;letter-spacing:0.58px;right:1267.40px;">518,755</div>
<div class="a t " style="top:584.9px;font-size:16.0px;line-height:21px;color:#242424;letter-spacing:0.58px;right:1048.40px;">7,686,842</div>
<div class="a t " style="top:584.9px;font-size:16.0px;line-height:21px;color:#242424;letter-spacing:0.58px;right:923.90px;">640,570</div>
<div class="a t " style="top:584.9px;font-size:16.0px;line-height:21px;color:#242424;letter-spacing:0.58px;right:814.90px;">640,570</div>
<div class="a t " style="top:584.9px;font-size:16.0px;line-height:21px;color:#242424;letter-spacing:0.58px;right:705.90px;">640,570</div>
<div class="a t " style="top:584.9px;font-size:16.0px;line-height:21px;color:#242424;letter-spacing:0.58px;right:596.90px;">640,570</div>
<div class="a t " style="top:584.9px;font-size:16.0px;line-height:21px;color:#242424;letter-spacing:0.58px;right:487.90px;">640,570</div>
<div class="a t " style="top:584.9px;font-size:16.0px;line-height:21px;color:#242424;letter-spacing:0.58px;right:378.90px;">640,570</div>
<div class="a t " style="top:584.9px;font-size:16.0px;line-height:21px;color:#242424;letter-spacing:0.58px;right:269.90px;">640,570</div>
<div class="a t " style="top:584.9px;font-size:16.0px;line-height:21px;color:#242424;letter-spacing:0.58px;right:160.90px;">640,570</div>
<div class="a t " style="top:584.9px;font-size:16.0px;line-height:21px;color:#242424;letter-spacing:0.58px;right:51.90px;">640,570</div>
<div class="a t " style="top:619.4px;font-size:16.0px;line-height:21px;color:#0c0c0c;font-weight:700;left:229.00px;">Total Revenue</div>
<div class="a t " style="top:619.4px;font-size:16.0px;line-height:21px;color:#1c1c1c;font-weight:700;letter-spacing:0.6px;right:1492.70px;">12,768,904</div>
<div class="a t " style="top:619.4px;font-size:16.0px;line-height:21px;color:#1c1c1c;font-weight:700;letter-spacing:0.6px;right:1375.70px;">4,903,973</div>
<div class="a t " style="top:619.4px;font-size:16.0px;line-height:21px;color:#1c1c1c;font-weight:700;letter-spacing:0.6px;right:1267.70px;">17,672,877</div>
<div class="a t " style="top:619.4px;font-size:16.0px;line-height:21px;color:#1c1c1c;font-weight:700;letter-spacing:0.6px;right:1155.70px;">N/A</div>
<div class="a t " style="top:619.4px;font-size:16.0px;line-height:21px;color:#1c1c1c;font-weight:700;letter-spacing:0.6px;right:1048.70px;">247,952,873</div>
<div class="a t " style="top:619.4px;font-size:16.0px;line-height:21px;color:#1c1c1c;font-weight:700;letter-spacing:0.6px;right:924.20px;">20,662,739</div>
<div class="a t " style="top:619.4px;font-size:16.0px;line-height:21px;color:#1c1c1c;font-weight:700;letter-spacing:0.6px;right:815.20px;">20,662,739</div>
<div class="a t " style="top:619.4px;font-size:16.0px;line-height:21px;color:#1c1c1c;font-weight:700;letter-spacing:0.6px;right:706.20px;">20,662,739</div>
<div class="a t " style="top:619.4px;font-size:16.0px;line-height:21px;color:#1c1c1c;font-weight:700;letter-spacing:0.6px;right:597.20px;">20,662,739</div>
<div class="a t " style="top:619.4px;font-size:16.0px;line-height:21px;color:#1c1c1c;font-weight:700;letter-spacing:0.6px;right:488.20px;">20,662,739</div>
<div class="a t " style="top:619.4px;font-size:16.0px;line-height:21px;color:#1c1c1c;font-weight:700;letter-spacing:0.6px;right:379.20px;">20,662,739</div>
<div class="a t " style="top:619.4px;font-size:16.0px;line-height:21px;color:#1c1c1c;font-weight:700;letter-spacing:0.6px;right:270.20px;">20,662,739</div>
<div class="a t " style="top:619.4px;font-size:16.0px;line-height:21px;color:#1c1c1c;font-weight:700;letter-spacing:0.6px;right:161.20px;">20,662,739</div>
<div class="a t " style="top:619.4px;font-size:16.0px;line-height:21px;color:#1c1c1c;font-weight:700;letter-spacing:0.6px;right:52.20px;">20,662,739</div>
<div class="a t " style="top:669.9px;font-size:16.0px;line-height:21px;color:#0c0c0c;font-weight:700;left:133.00px;">Cost of Sales</div>
<div class="a t " style="top:694.9px;font-size:16.0px;line-height:21px;color:#242424;letter-spacing:0.62px;right:2029.60px;">50010</div>
<div class="a t " style="top:694.9px;font-size:16.0px;line-height:21px;color:#242424;letter-spacing:0.32px;left:229.00px;">COGS - Product Sales</div>
<div class="a t " style="top:694.9px;font-size:16.0px;line-height:21px;color:#242424;letter-spacing:0.6px;left:87.30px;width:1000px;text-align:center;">300</div>
<div class="a t " style="top:694.9px;font-size:16.0px;line-height:21px;color:#242424;letter-spacing:0.58px;right:1375.40px;">951,301</div>
<div class="a t " style="top:694.9px;font-size:16.0px;line-height:21px;color:#242424;letter-spacing:0.58px;right:1267.40px;">951,301</div>
<div class="a t " style="top:694.9px;font-size:16.0px;line-height:21px;color:#242424;letter-spacing:0.58px;right:1048.40px;">14,096,257</div>
<div class="a t " style="top:694.9px;font-size:16.0px;line-height:21px;color:#242424;letter-spacing:0.58px;right:923.90px;">1,174,688</div>
<div class="a t " style="top:694.9px;font-size:16.0px;line-height:21px;color:#242424;letter-spacing:0.58px;right:814.90px;">1,174,688</div>
<div class="a t " style="top:694.9px;font-size:16.0px;line-height:21px;color:#242424;letter-spacing:0.58px;right:705.90px;">1,174,688</div>
<div class="a t " style="top:694.9px;font-size:16.0px;line-height:21px;color:#242424;letter-spacing:0.58px;right:596.90px;">1,174,688</div>
<div class="a t " style="top:694.9px;font-size:16.0px;line-height:21px;color:#242424;letter-spacing:0.58px;right:487.90px;">1,174,688</div>
<div class="a t " style="top:694.9px;font-size:16.0px;line-height:21px;color:#242424;letter-spacing:0.58px;right:378.90px;">1,174,688</div>
<div class="a t " style="top:694.9px;font-size:16.0px;line-height:21px;color:#242424;letter-spacing:0.58px;right:269.90px;">1,174,688</div>
<div class="a t " style="top:694.9px;font-size:16.0px;line-height:21px;color:#242424;letter-spacing:0.58px;right:160.90px;">1,174,688</div>
<div class="a t " style="top:694.9px;font-size:16.0px;line-height:21px;color:#242424;letter-spacing:0.58px;right:51.90px;">1,174,688</div>
<div class="a t " style="top:728.4px;font-size:16.0px;line-height:21px;color:#0c0c0c;font-weight:700;left:229.00px;">Cost of Sales</div>
<div class="a t " style="top:728.4px;font-size:16.0px;line-height:21px;color:#1c1c1c;font-weight:700;letter-spacing:0.6px;right:1492.70px;">0</div>
<div class="a t " style="top:728.4px;font-size:16.0px;line-height:21px;color:#1c1c1c;font-weight:700;letter-spacing:0.6px;right:1375.70px;">951,301</div>
<div class="a t " style="top:728.4px;font-size:16.0px;line-height:21px;color:#1c1c1c;font-weight:700;letter-spacing:0.6px;right:1267.70px;">951,301</div>
<div class="a t " style="top:728.4px;font-size:16.0px;line-height:21px;color:#1c1c1c;font-weight:700;letter-spacing:0.6px;right:1155.70px;">N/A</div>
<div class="a t " style="top:728.4px;font-size:16.0px;line-height:21px;color:#1c1c1c;font-weight:700;letter-spacing:0.6px;right:1048.70px;">14,096,257</div>
<div class="a t " style="top:728.4px;font-size:16.0px;line-height:21px;color:#1c1c1c;font-weight:700;letter-spacing:0.6px;right:924.20px;">1,174,688</div>
<div class="a t " style="top:728.4px;font-size:16.0px;line-height:21px;color:#1c1c1c;font-weight:700;letter-spacing:0.6px;right:815.20px;">1,174,688</div>
<div class="a t " style="top:728.4px;font-size:16.0px;line-height:21px;color:#1c1c1c;font-weight:700;letter-spacing:0.6px;right:706.20px;">1,174,688</div>
<div class="a t " style="top:728.4px;font-size:16.0px;line-height:21px;color:#1c1c1c;font-weight:700;letter-spacing:0.6px;right:597.20px;">1,174,688</div>
<div class="a t " style="top:728.4px;font-size:16.0px;line-height:21px;color:#1c1c1c;font-weight:700;letter-spacing:0.6px;right:488.20px;">1,174,688</div>
<div class="a t " style="top:728.4px;font-size:16.0px;line-height:21px;color:#1c1c1c;font-weight:700;letter-spacing:0.6px;right:379.20px;">1,174,688</div>
<div class="a t " style="top:728.4px;font-size:16.0px;line-height:21px;color:#1c1c1c;font-weight:700;letter-spacing:0.6px;right:270.20px;">1,174,688</div>
<div class="a t " style="top:728.4px;font-size:16.0px;line-height:21px;color:#1c1c1c;font-weight:700;letter-spacing:0.6px;right:161.20px;">1,174,688</div>
<div class="a t " style="top:728.4px;font-size:16.0px;line-height:21px;color:#1c1c1c;font-weight:700;letter-spacing:0.6px;right:52.20px;">1,174,688</div>
<div class="a t " style="top:778.9px;font-size:16.0px;line-height:21px;color:#0c0c0c;font-weight:700;left:133.00px;">Profit Margin</div>
<div class="a t " style="top:778.9px;font-size:16.0px;line-height:21px;color:#1c1c1c;font-weight:700;letter-spacing:0.6px;right:1492.70px;">12,768,904</div>
<div class="a t " style="top:778.9px;font-size:16.0px;line-height:21px;color:#1c1c1c;font-weight:700;letter-spacing:0.6px;right:1375.70px;">3,952,672</div>
<div class="a t " style="top:778.9px;font-size:16.0px;line-height:21px;color:#1c1c1c;font-weight:700;letter-spacing:0.6px;right:1267.70px;">16,721,576</div>
<div class="a t " style="top:778.9px;font-size:16.0px;line-height:21px;color:#1c1c1c;font-weight:700;letter-spacing:0.6px;right:1155.70px;">NA</div>
<div class="a t " style="top:778.9px;font-size:16.0px;line-height:21px;color:#1c1c1c;font-weight:700;letter-spacing:0.6px;right:1048.70px;">233,856,616</div>
<div class="a t " style="top:778.9px;font-size:16.0px;line-height:21px;color:#1c1c1c;font-weight:700;letter-spacing:0.6px;right:924.20px;">19,488,051</div>
<div class="a t " style="top:778.9px;font-size:16.0px;line-height:21px;color:#1c1c1c;font-weight:700;letter-spacing:0.6px;right:815.20px;">19,488,051</div>
<div class="a t " style="top:778.9px;font-size:16.0px;line-height:21px;color:#1c1c1c;font-weight:700;letter-spacing:0.6px;right:706.20px;">19,488,051</div>
<div class="a t " style="top:778.9px;font-size:16.0px;line-height:21px;color:#1c1c1c;font-weight:700;letter-spacing:0.6px;right:597.20px;">19,488,051</div>
<div class="a t " style="top:778.9px;font-size:16.0px;line-height:21px;color:#1c1c1c;font-weight:700;letter-spacing:0.6px;right:488.20px;">19,488,051</div>
<div class="a t " style="top:778.9px;font-size:16.0px;line-height:21px;color:#1c1c1c;font-weight:700;letter-spacing:0.6px;right:379.20px;">19,488,051</div>
<div class="a t " style="top:778.9px;font-size:16.0px;line-height:21px;color:#1c1c1c;font-weight:700;letter-spacing:0.6px;right:270.20px;">19,488,051</div>
<div class="a t " style="top:778.9px;font-size:16.0px;line-height:21px;color:#1c1c1c;font-weight:700;letter-spacing:0.6px;right:161.20px;">19,488,051</div>
<div class="a t " style="top:778.9px;font-size:16.0px;line-height:21px;color:#1c1c1c;font-weight:700;letter-spacing:0.6px;right:52.20px;">19,488,051</div>
<div class="a t " style="top:803.9px;font-size:16.0px;line-height:21px;color:#0c0c0c;font-weight:700;left:133.00px;">Profit Margin %</div>
<div class="a t " style="top:803.9px;font-size:16.0px;line-height:21px;color:#1c1c1c;font-weight:700;letter-spacing:0.6px;right:1488.70px;">100.0%</div>
<div class="a t " style="top:803.9px;font-size:16.0px;line-height:21px;color:#1c1c1c;font-weight:700;letter-spacing:0.6px;right:1371.70px;">80.6%</div>
<div class="a t " style="top:803.9px;font-size:16.0px;line-height:21px;color:#1c1c1c;font-weight:700;letter-spacing:0.6px;right:1263.70px;">94.6%</div>
<div class="a t " style="top:803.9px;font-size:16.0px;line-height:21px;color:#1c1c1c;font-weight:700;letter-spacing:0.6px;right:1155.70px;">NA</div>
<div class="a t " style="top:803.9px;font-size:16.0px;line-height:21px;color:#1c1c1c;font-weight:700;letter-spacing:0.6px;right:1048.70px;">94.3%</div>
<div class="a t " style="top:803.9px;font-size:16.0px;line-height:21px;color:#1c1c1c;font-weight:700;letter-spacing:0.6px;right:924.20px;">94.3%</div>
<div class="a t " style="top:803.9px;font-size:16.0px;line-height:21px;color:#1c1c1c;font-weight:700;letter-spacing:0.6px;right:815.20px;">94.3%</div>
<div class="a t " style="top:803.9px;font-size:16.0px;line-height:21px;color:#1c1c1c;font-weight:700;letter-spacing:0.6px;right:706.20px;">94.3%</div>
<div class="a t " style="top:803.9px;font-size:16.0px;line-height:21px;color:#1c1c1c;font-weight:700;letter-spacing:0.6px;right:597.20px;">94.3%</div>
<div class="a t " style="top:803.9px;font-size:16.0px;line-height:21px;color:#1c1c1c;font-weight:700;letter-spacing:0.6px;right:488.20px;">94.3%</div>
<div class="a t " style="top:803.9px;font-size:16.0px;line-height:21px;color:#1c1c1c;font-weight:700;letter-spacing:0.6px;right:379.20px;">94.3%</div>
<div class="a t " style="top:803.9px;font-size:16.0px;line-height:21px;color:#1c1c1c;font-weight:700;letter-spacing:0.6px;right:270.20px;">94.3%</div>
<div class="a t " style="top:803.9px;font-size:16.0px;line-height:21px;color:#1c1c1c;font-weight:700;letter-spacing:0.6px;right:161.20px;">94.3%</div>
<div class="a t " style="top:803.9px;font-size:16.0px;line-height:21px;color:#1c1c1c;font-weight:700;letter-spacing:0.6px;right:52.20px;">94.3%</div>
<div class="a t " style="top:853.9px;font-size:16.0px;line-height:21px;color:#0c0c0c;font-weight:700;left:133.00px;">Departmental Expenses</div>
<div class="a t " style="top:878.9px;font-size:16.0px;line-height:21px;color:#242424;font-style:italic;letter-spacing:0.62px;left:133.00px;">Administration</div>
<div class="a t " style="top:903.9px;font-size:16.0px;line-height:21px;color:#242424;letter-spacing:0.62px;right:2029.60px;">60010</div>
<div class="a t " style="top:903.9px;font-size:16.0px;line-height:21px;color:#242424;letter-spacing:0.32px;left:229.00px;">Full Time - Salary</div>
<div class="a t " style="top:903.9px;font-size:16.0px;line-height:21px;color:#242424;letter-spacing:0.6px;left:87.30px;width:1000px;text-align:center;">100</div>
<div class="a t " style="top:903.9px;font-size:16.0px;line-height:21px;color:#242424;letter-spacing:0.58px;right:1492.40px;">687,467</div>
<div class="a t " style="top:903.9px;font-size:16.0px;line-height:21px;color:#242424;letter-spacing:0.58px;right:1375.40px;">256,229</div>
<div class="a t " style="top:903.9px;font-size:16.0px;line-height:21px;color:#242424;letter-spacing:0.58px;right:1267.40px;">943,696</div>
<div class="a t " style="top:903.9px;font-size:16.0px;line-height:21px;color:#242424;letter-spacing:0.58px;right:1048.40px;">13,983,560</div>
<div class="a t " style="top:903.9px;font-size:16.0px;line-height:21px;color:#242424;letter-spacing:0.58px;right:923.90px;">1,165,297</div>
<div class="a t " style="top:903.9px;font-size:16.0px;line-height:21px;color:#242424;letter-spacing:0.58px;right:814.90px;">1,165,297</div>
<div class="a t " style="top:903.9px;font-size:16.0px;line-height:21px;color:#242424;letter-spacing:0.58px;right:705.90px;">1,165,297</div>
<div class="a t " style="top:903.9px;font-size:16.0px;line-height:21px;color:#242424;letter-spacing:0.58px;right:596.90px;">1,165,297</div>
<div class="a t " style="top:903.9px;font-size:16.0px;line-height:21px;color:#242424;letter-spacing:0.58px;right:487.90px;">1,165,297</div>
<div class="a t " style="top:903.9px;font-size:16.0px;line-height:21px;color:#242424;letter-spacing:0.58px;right:378.90px;">1,165,297</div>
<div class="a t " style="top:903.9px;font-size:16.0px;line-height:21px;color:#242424;letter-spacing:0.58px;right:269.90px;">1,165,297</div>
<div class="a t " style="top:903.9px;font-size:16.0px;line-height:21px;color:#242424;letter-spacing:0.58px;right:160.90px;">1,165,297</div>
<div class="a t " style="top:903.9px;font-size:16.0px;line-height:21px;color:#242424;letter-spacing:0.58px;right:51.90px;">1,165,297</div>
<div class="a t " style="top:928.9px;font-size:16.0px;line-height:21px;color:#242424;letter-spacing:0.62px;right:2029.60px;">60020</div>
<div class="a t " style="top:928.9px;font-size:16.0px;line-height:21px;color:#242424;letter-spacing:0.32px;left:229.00px;">Full Time - Commission</div>
<div class="a t " style="top:928.9px;font-size:16.0px;line-height:21px;color:#242424;letter-spacing:0.6px;left:87.30px;width:1000px;text-align:center;">100</div>
<div class="a t " style="top:928.9px;font-size:16.0px;line-height:21px;color:#242424;letter-spacing:0.58px;right:1492.40px;">56,800</div>
<div class="a t " style="top:928.9px;font-size:16.0px;line-height:21px;color:#242424;letter-spacing:0.58px;right:1375.40px;">21,747</div>
<div class="a t " style="top:928.9px;font-size:16.0px;line-height:21px;color:#242424;letter-spacing:0.58px;right:1267.40px;">78,547</div>
<div class="a t " style="top:928.9px;font-size:16.0px;line-height:21px;color:#242424;letter-spacing:0.58px;right:1048.40px;">1,163,904</div>
<div class="a t " style="top:928.9px;font-size:16.0px;line-height:21px;color:#242424;letter-spacing:0.58px;right:923.90px;">96,992</div>
<div class="a t " style="top:928.9px;font-size:16.0px;line-height:21px;color:#242424;letter-spacing:0.58px;right:814.90px;">96,992</div>
<div class="a t " style="top:928.9px;font-size:16.0px;line-height:21px;color:#242424;letter-spacing:0.58px;right:705.90px;">96,992</div>
<div class="a t " style="top:928.9px;font-size:16.0px;line-height:21px;color:#242424;letter-spacing:0.58px;right:596.90px;">96,992</div>
<div class="a t " style="top:928.9px;font-size:16.0px;line-height:21px;color:#242424;letter-spacing:0.58px;right:487.90px;">96,992</div>
<div class="a t " style="top:928.9px;font-size:16.0px;line-height:21px;color:#242424;letter-spacing:0.58px;right:378.90px;">96,992</div>
<div class="a t " style="top:928.9px;font-size:16.0px;line-height:21px;color:#242424;letter-spacing:0.58px;right:269.90px;">96,992</div>
<div class="a t " style="top:928.9px;font-size:16.0px;line-height:21px;color:#242424;letter-spacing:0.58px;right:160.90px;">96,992</div>
<div class="a t " style="top:928.9px;font-size:16.0px;line-height:21px;color:#242424;letter-spacing:0.58px;right:51.90px;">96,992</div>
<div class="a t " style="top:953.9px;font-size:16.0px;line-height:21px;color:#242424;letter-spacing:0.62px;right:2029.60px;">60030</div>
<div class="a t " style="top:953.9px;font-size:16.0px;line-height:21px;color:#242424;letter-spacing:0.32px;left:229.00px;">Full Time - Bonus</div>
<div class="a t " style="top:953.9px;font-size:16.0px;line-height:21px;color:#242424;letter-spacing:0.6px;left:87.30px;width:1000px;text-align:center;">100</div>
<div class="a t " style="top:953.9px;font-size:16.0px;line-height:21px;color:#242424;letter-spacing:0.58px;right:1492.40px;">180,778</div>
<div class="a t " style="top:953.9px;font-size:16.0px;line-height:21px;color:#242424;letter-spacing:0.58px;right:1375.40px;">66,194</div>
<div class="a t " style="top:953.9px;font-size:16.0px;line-height:21px;color:#242424;letter-spacing:0.58px;right:1267.40px;">246,972</div>
<div class="a t " style="top:953.9px;font-size:16.0px;line-height:21px;color:#242424;letter-spacing:0.58px;right:1048.40px;">3,659,592</div>
<div class="a t " style="top:953.9px;font-size:16.0px;line-height:21px;color:#242424;letter-spacing:0.58px;right:923.90px;">304,966</div>
<div class="a t " style="top:953.9px;font-size:16.0px;line-height:21px;color:#242424;letter-spacing:0.58px;right:814.90px;">304,966</div>
<div class="a t " style="top:953.9px;font-size:16.0px;line-height:21px;color:#242424;letter-spacing:0.58px;right:705.90px;">304,966</div>
<div class="a t " style="top:953.9px;font-size:16.0px;line-height:21px;color:#242424;letter-spacing:0.58px;right:596.90px;">304,966</div>
<div class="a t " style="top:953.9px;font-size:16.0px;line-height:21px;color:#242424;letter-spacing:0.58px;right:487.90px;">304,966</div>
<div class="a t " style="top:953.9px;font-size:16.0px;line-height:21px;color:#242424;letter-spacing:0.58px;right:378.90px;">304,966</div>
<div class="a t " style="top:953.9px;font-size:16.0px;line-height:21px;color:#242424;letter-spacing:0.58px;right:269.90px;">304,966</div>
<div class="a t " style="top:953.9px;font-size:16.0px;line-height:21px;color:#242424;letter-spacing:0.58px;right:160.90px;">304,966</div>
<div class="a t " style="top:953.9px;font-size:16.0px;line-height:21px;color:#242424;letter-spacing:0.58px;right:51.90px;">304,966</div>
<div class="a t " style="top:978.9px;font-size:16.0px;line-height:21px;color:#242424;letter-spacing:0.62px;right:2029.60px;">61010</div>
<div class="a t " style="top:978.9px;font-size:16.0px;line-height:21px;color:#242424;letter-spacing:0.32px;left:229.00px;">Part Time - Salary</div>
<div class="a t " style="top:978.9px;font-size:16.0px;line-height:21px;color:#242424;letter-spacing:0.6px;left:87.30px;width:1000px;text-align:center;">100</div>
<div class="a t " style="top:978.9px;font-size:16.0px;line-height:21px;color:#242424;letter-spacing:0.58px;right:1492.40px;">74,032</div>
<div class="a t " style="top:978.9px;font-size:16.0px;line-height:21px;color:#242424;letter-spacing:0.58px;right:1375.40px;">26,979</div>
<div class="a t " style="top:978.9px;font-size:16.0px;line-height:21px;color:#242424;letter-spacing:0.58px;right:1267.40px;">101,011</div>
<div class="a t " style="top:978.9px;font-size:16.0px;line-height:21px;color:#242424;letter-spacing:0.58px;right:1155.40px;">5.00%</div>
<div class="a t " style="top:978.9px;font-size:16.0px;line-height:21px;color:#242424;letter-spacing:0.58px;right:1048.40px;">106,062</div>
<div class="a t " style="top:978.9px;font-size:16.0px;line-height:21px;color:#242424;letter-spacing:0.58px;right:923.90px;">8,838</div>
<div class="a t " style="top:978.9px;font-size:16.0px;line-height:21px;color:#242424;letter-spacing:0.58px;right:814.90px;">8,838</div>
<div class="a t " style="top:978.9px;font-size:16.0px;line-height:21px;color:#242424;letter-spacing:0.58px;right:705.90px;">8,838</div>
<div class="a t " style="top:978.9px;font-size:16.0px;line-height:21px;color:#242424;letter-spacing:0.58px;right:596.90px;">8,838</div>
<div class="a t " style="top:978.9px;font-size:16.0px;line-height:21px;color:#242424;letter-spacing:0.58px;right:487.90px;">8,838</div>
<div class="a t " style="top:978.9px;font-size:16.0px;line-height:21px;color:#242424;letter-spacing:0.58px;right:378.90px;">8,838</div>
<div class="a t " style="top:978.9px;font-size:16.0px;line-height:21px;color:#242424;letter-spacing:0.58px;right:269.90px;">8,838</div>
<div class="a t " style="top:978.9px;font-size:16.0px;line-height:21px;color:#242424;letter-spacing:0.58px;right:160.90px;">8,838</div>
<div class="a t " style="top:978.9px;font-size:16.0px;line-height:21px;color:#242424;letter-spacing:0.58px;right:51.90px;">8,838</div>
<div class="a t " style="top:1003.9px;font-size:16.0px;line-height:21px;color:#242424;letter-spacing:0.62px;right:2029.60px;">61040</div>
<div class="a t " style="top:1003.9px;font-size:16.0px;line-height:21px;color:#242424;letter-spacing:0.32px;left:229.00px;">Part Time - Overtime</div>
<div class="a t " style="top:1003.9px;font-size:16.0px;line-height:21px;color:#242424;letter-spacing:0.6px;left:87.30px;width:1000px;text-align:center;">100</div>
<div class="a t " style="top:1003.9px;font-size:16.0px;line-height:21px;color:#242424;letter-spacing:0.58px;right:1492.40px;">18,414</div>
<div class="a t " style="top:1003.9px;font-size:16.0px;line-height:21px;color:#242424;letter-spacing:0.58px;right:1375.40px;">7,028</div>
<div class="a t " style="top:1003.9px;font-size:16.0px;line-height:21px;color:#242424;letter-spacing:0.58px;right:1267.40px;">25,442</div>
<div class="a t " style="top:1003.9px;font-size:16.0px;line-height:21px;color:#242424;letter-spacing:0.58px;right:1048.40px;">376,992</div>
<div class="a t " style="top:1003.9px;font-size:16.0px;line-height:21px;color:#242424;letter-spacing:0.58px;right:923.90px;">31,416</div>
<div class="a t " style="top:1003.9px;font-size:16.0px;line-height:21px;color:#242424;letter-spacing:0.58px;right:814.90px;">31,416</div>
<div class="a t " style="top:1003.9px;font-size:16.0px;line-height:21px;color:#242424;letter-spacing:0.58px;right:705.90px;">31,416</div>
<div class="a t " style="top:1003.9px;font-size:16.0px;line-height:21px;color:#242424;letter-spacing:0.58px;right:596.90px;">31,416</div>
<div class="a t " style="top:1003.9px;font-size:16.0px;line-height:21px;color:#242424;letter-spacing:0.58px;right:487.90px;">31,416</div>
<div class="a t " style="top:1003.9px;font-size:16.0px;line-height:21px;color:#242424;letter-spacing:0.58px;right:378.90px;">31,416</div>
<div class="a t " style="top:1003.9px;font-size:16.0px;line-height:21px;color:#242424;letter-spacing:0.58px;right:269.90px;">31,416</div>
<div class="a t " style="top:1003.9px;font-size:16.0px;line-height:21px;color:#242424;letter-spacing:0.58px;right:160.90px;">31,416</div>
<div class="a t " style="top:1003.9px;font-size:16.0px;line-height:21px;color:#242424;letter-spacing:0.58px;right:51.90px;">31,416</div>
<div class="a t " style="top:1028.9px;font-size:16.0px;line-height:21px;color:#242424;letter-spacing:0.62px;right:2029.60px;">61050</div>
<div class="a t " style="top:1028.9px;font-size:16.0px;line-height:21px;color:#242424;letter-spacing:0.32px;left:229.00px;">Part Time - Bonus</div>
<div class="a t " style="top:1028.9px;font-size:16.0px;line-height:21px;color:#242424;letter-spacing:0.6px;left:87.30px;width:1000px;text-align:center;">100</div>
<div class="a t " style="top:1028.9px;font-size:16.0px;line-height:21px;color:#242424;letter-spacing:0.58px;right:1492.40px;">27,582</div>
<div class="a t " style="top:1028.9px;font-size:16.0px;line-height:21px;color:#242424;letter-spacing:0.58px;right:1375.40px;">10,434</div>
<div class="a t " style="top:1028.9px;font-size:16.0px;line-height:21px;color:#242424;letter-spacing:0.58px;right:1267.40px;">38,016</div>
<div class="a t " style="top:1028.9px;font-size:16.0px;line-height:21px;color:#242424;letter-spacing:0.58px;right:1048.40px;">563,323</div>
<div class="a t " style="top:1028.9px;font-size:16.0px;line-height:21px;color:#242424;letter-spacing:0.58px;right:923.90px;">46,944</div>
<div class="a t " style="top:1028.9px;font-size:16.0px;line-height:21px;color:#242424;letter-spacing:0.58px;right:814.90px;">46,944</div>
<div class="a t " style="top:1028.9px;font-size:16.0px;line-height:21px;color:#242424;letter-spacing:0.58px;right:705.90px;">46,944</div>
<div class="a t " style="top:1028.9px;font-size:16.0px;line-height:21px;color:#242424;letter-spacing:0.58px;right:596.90px;">46,944</div>
<div class="a t " style="top:1028.9px;font-size:16.0px;line-height:21px;color:#242424;letter-spacing:0.58px;right:487.90px;">46,944</div>
<div class="a t " style="top:1028.9px;font-size:16.0px;line-height:21px;color:#242424;letter-spacing:0.58px;right:378.90px;">46,944</div>
<div class="a t " style="top:1028.9px;font-size:16.0px;line-height:21px;color:#242424;letter-spacing:0.58px;right:269.90px;">46,944</div>
<div class="a t " style="top:1028.9px;font-size:16.0px;line-height:21px;color:#242424;letter-spacing:0.58px;right:160.90px;">46,944</div>
<div class="a t " style="top:1028.9px;font-size:16.0px;line-height:21px;color:#242424;letter-spacing:0.58px;right:51.90px;">46,944</div>
<div class="a t " style="top:1053.9px;font-size:16.0px;line-height:21px;color:#242424;letter-spacing:0.62px;right:2029.60px;">61500</div>
<div class="a t " style="top:1053.9px;font-size:16.0px;line-height:21px;color:#242424;letter-spacing:0.32px;left:229.00px;">Payroll Taxes - FICA</div>
<div class="a t " style="top:1053.9px;font-size:16.0px;line-height:21px;color:#242424;letter-spacing:0.6px;left:87.30px;width:1000px;text-align:center;">100</div>
<div class="a t " style="top:1053.9px;font-size:16.0px;line-height:21px;color:#242424;letter-spacing:0.58px;right:1492.40px;">130,655</div>
<div class="a t " style="top:1053.9px;font-size:16.0px;line-height:21px;color:#242424;letter-spacing:0.58px;right:1375.40px;">47,302</div>
<div class="a t " style="top:1053.9px;font-size:16.0px;line-height:21px;color:#242424;letter-spacing:0.58px;right:1267.40px;">177,957</div>
<div class="a t " style="top:1053.9px;font-size:16.0px;line-height:21px;color:#242424;letter-spacing:0.58px;right:1048.40px;">2,636,942</div>
<div class="a t " style="top:1053.9px;font-size:16.0px;line-height:21px;color:#242424;letter-spacing:0.58px;right:923.90px;">219,745</div>
<div class="a t " style="top:1053.9px;font-size:16.0px;line-height:21px;color:#242424;letter-spacing:0.58px;right:814.90px;">219,745</div>
<div class="a t " style="top:1053.9px;font-size:16.0px;line-height:21px;color:#242424;letter-spacing:0.58px;right:705.90px;">219,745</div>
<div class="a t " style="top:1053.9px;font-size:16.0px;line-height:21px;color:#242424;letter-spacing:0.58px;right:596.90px;">219,745</div>
<div class="a t " style="top:1053.9px;font-size:16.0px;line-height:21px;color:#242424;letter-spacing:0.58px;right:487.90px;">219,745</div>
<div class="a t " style="top:1053.9px;font-size:16.0px;line-height:21px;color:#242424;letter-spacing:0.58px;right:378.90px;">219,745</div>
<div class="a t " style="top:1053.9px;font-size:16.0px;line-height:21px;color:#242424;letter-spacing:0.58px;right:269.90px;">219,745</div>
<div class="a t " style="top:1053.9px;font-size:16.0px;line-height:21px;color:#242424;letter-spacing:0.58px;right:160.90px;">219,745</div>
<div class="a t " style="top:1053.9px;font-size:16.0px;line-height:21px;color:#242424;letter-spacing:0.58px;right:51.90px;">219,745</div>
<div class="a t " style="top:1078.9px;font-size:16.0px;line-height:21px;color:#242424;letter-spacing:0.62px;right:2029.60px;">61510</div>
<div class="a t " style="top:1078.9px;font-size:16.0px;line-height:21px;color:#242424;letter-spacing:0.32px;left:229.00px;">Payroll Taxes - FUTA</div>
<div class="a t " style="top:1078.9px;font-size:16.0px;line-height:21px;color:#242424;letter-spacing:0.6px;left:87.30px;width:1000px;text-align:center;">100</div>
<div class="a t " style="top:1078.9px;font-size:16.0px;line-height:21px;color:#242424;letter-spacing:0.58px;right:1492.40px;">18,083</div>
<div class="a t " style="top:1078.9px;font-size:16.0px;line-height:21px;color:#242424;letter-spacing:0.58px;right:1375.40px;">6,578</div>
<div class="a t " style="top:1078.9px;font-size:16.0px;line-height:21px;color:#242424;letter-spacing:0.58px;right:1267.40px;">24,661</div>
<div class="a t " style="top:1078.9px;font-size:16.0px;line-height:21px;color:#242424;letter-spacing:0.58px;right:1048.40px;">365,430</div>
<div class="a t " style="top:1078.9px;font-size:16.0px;line-height:21px;color:#242424;letter-spacing:0.58px;right:923.90px;">30,452</div>
<div class="a t " style="top:1078.9px;font-size:16.0px;line-height:21px;color:#242424;letter-spacing:0.58px;right:814.90px;">30,452</div>
<div class="a t " style="top:1078.9px;font-size:16.0px;line-height:21px;color:#242424;letter-spacing:0.58px;right:705.90px;">30,452</div>
<div class="a t " style="top:1078.9px;font-size:16.0px;line-height:21px;color:#242424;letter-spacing:0.58px;right:596.90px;">30,452</div>
<div class="a t " style="top:1078.9px;font-size:16.0px;line-height:21px;color:#242424;letter-spacing:0.58px;right:487.90px;">30,452</div>
<div class="a t " style="top:1078.9px;font-size:16.0px;line-height:21px;color:#242424;letter-spacing:0.58px;right:378.90px;">30,452</div>
<div class="a t " style="top:1078.9px;font-size:16.0px;line-height:21px;color:#242424;letter-spacing:0.58px;right:269.90px;">30,452</div>
<div class="a t " style="top:1078.9px;font-size:16.0px;line-height:21px;color:#242424;letter-spacing:0.58px;right:160.90px;">30,452</div>
<div class="a t " style="top:1078.9px;font-size:16.0px;line-height:21px;color:#242424;letter-spacing:0.58px;right:51.90px;">30,452</div>
<div class="a t " style="top:1103.9px;font-size:16.0px;line-height:21px;color:#242424;letter-spacing:0.62px;right:2029.60px;">61520</div>
<div class="a t " style="top:1103.9px;font-size:16.0px;line-height:21px;color:#242424;letter-spacing:0.32px;left:229.00px;">Payroll Taxes - SUTA</div>
<div class="a t " style="top:1103.9px;font-size:16.0px;line-height:21px;color:#242424;letter-spacing:0.6px;left:87.30px;width:1000px;text-align:center;">100</div>
<div class="a t " style="top:1103.9px;font-size:16.0px;line-height:21px;color:#242424;letter-spacing:0.58px;right:1492.40px;">18,151</div>
<div class="a t " style="top:1103.9px;font-size:16.0px;line-height:21px;color:#242424;letter-spacing:0.58px;right:1375.40px;">6,852</div>
<div class="a t " style="top:1103.9px;font-size:16.0px;line-height:21px;color:#242424;letter-spacing:0.58px;right:1267.40px;">25,003</div>
<div class="a t " style="top:1103.9px;font-size:16.0px;line-height:21px;color:#242424;letter-spacing:0.58px;right:1048.40px;">370,498</div>
<div class="a t " style="top:1103.9px;font-size:16.0px;line-height:21px;color:#242424;letter-spacing:0.58px;right:923.90px;">30,875</div>
<div class="a t " style="top:1103.9px;font-size:16.0px;line-height:21px;color:#242424;letter-spacing:0.58px;right:814.90px;">30,875</div>
<div class="a t " style="top:1103.9px;font-size:16.0px;line-height:21px;color:#242424;letter-spacing:0.58px;right:705.90px;">30,875</div>
<div class="a t " style="top:1103.9px;font-size:16.0px;line-height:21px;color:#242424;letter-spacing:0.58px;right:596.90px;">30,875</div>
<div class="a t " style="top:1103.9px;font-size:16.0px;line-height:21px;color:#242424;letter-spacing:0.58px;right:487.90px;">30,875</div>
<div class="a t " style="top:1103.9px;font-size:16.0px;line-height:21px;color:#242424;letter-spacing:0.58px;right:378.90px;">30,875</div>
<div class="a t " style="top:1103.9px;font-size:16.0px;line-height:21px;color:#242424;letter-spacing:0.58px;right:269.90px;">30,875</div>
<div class="a t " style="top:1103.9px;font-size:16.0px;line-height:21px;color:#242424;letter-spacing:0.58px;right:160.90px;">30,875</div>
<div class="a t " style="top:1103.9px;font-size:16.0px;line-height:21px;color:#242424;letter-spacing:0.58px;right:51.90px;">30,875</div>
<div class="a t " style="top:1128.9px;font-size:16.0px;line-height:21px;color:#242424;letter-spacing:0.62px;right:2029.60px;">61530</div>
<div class="a t " style="top:1128.9px;font-size:16.0px;line-height:21px;color:#242424;letter-spacing:0.32px;left:229.00px;">Payroll Taxes - Workers Compensation</div>
<div class="a t " style="top:1128.9px;font-size:16.0px;line-height:21px;color:#242424;letter-spacing:0.6px;left:87.30px;width:1000px;text-align:center;">100</div>
<div class="a t " style="top:1128.9px;font-size:16.0px;line-height:21px;color:#242424;letter-spacing:0.58px;right:1492.40px;">18,160</div>
<div class="a t " style="top:1128.9px;font-size:16.0px;line-height:21px;color:#242424;letter-spacing:0.58px;right:1375.40px;">6,924</div>
<div class="a t " style="top:1128.9px;font-size:16.0px;line-height:21px;color:#242424;letter-spacing:0.58px;right:1267.40px;">25,084</div>
<div class="a t " style="top:1128.9px;font-size:16.0px;line-height:21px;color:#242424;letter-spacing:0.58px;right:1048.40px;">371,685</div>
<div class="a t " style="top:1128.9px;font-size:16.0px;line-height:21px;color:#242424;letter-spacing:0.58px;right:923.90px;">30,974</div>
<div class="a t " style="top:1128.9px;font-size:16.0px;line-height:21px;color:#242424;letter-spacing:0.58px;right:814.90px;">30,974</div>
<div class="a t " style="top:1128.9px;font-size:16.0px;line-height:21px;color:#242424;letter-spacing:0.58px;right:705.90px;">30,974</div>
<div class="a t " style="top:1128.9px;font-size:16.0px;line-height:21px;color:#242424;letter-spacing:0.58px;right:596.90px;">30,974</div>
<div class="a t " style="top:1128.9px;font-size:16.0px;line-height:21px;color:#242424;letter-spacing:0.58px;right:487.90px;">30,974</div>
<div class="a t " style="top:1128.9px;font-size:16.0px;line-height:21px;color:#242424;letter-spacing:0.58px;right:378.90px;">30,974</div>
<div class="a t " style="top:1128.9px;font-size:16.0px;line-height:21px;color:#242424;letter-spacing:0.58px;right:269.90px;">30,974</div>
<div class="a t " style="top:1128.9px;font-size:16.0px;line-height:21px;color:#242424;letter-spacing:0.58px;right:160.90px;">30,974</div>
<div class="a t " style="top:1128.9px;font-size:16.0px;line-height:21px;color:#242424;letter-spacing:0.58px;right:51.90px;">30,974</div>
</div></div>
<div class="a" style="left:2115px;top:268px;width:30px;height:877px;background:#e4e4e4;border-left:1.5px solid #ababab;"></div>
<div class="a" style="left:2117px;top:289px;width:26px;height:836px;background:#dadada;"></div>
<div class="a" style="left:2120.5px;top:269px;width:20px;height:19.5px;background:#fff;border:1px solid #bdbdbd;"></div>
<div class="a" style="left:2120.5px;top:289.5px;width:20px;height:70.5px;background:#fff;border:1px solid #bdbdbd;"></div>
<div class="a" style="left:2120.5px;top:1124px;width:20px;height:20px;background:#fff;border:1px solid #bdbdbd;"></div>
<svg style="left:2125px;top:275px" width="11" height="7" viewBox="0 0 11 7"><path d="M.5 6.500L5.500.8l5 5.700z" fill="#6e6e6e"/></svg>
<svg style="left:2125px;top:1131px" width="11" height="7" viewBox="0 0 11 7"><path d="M.5.5L5.500 6.200l5-5.700z" fill="#6e6e6e"/></svg>
<div class="a" style="left:116px;top:1145px;width:2029px;height:39px;background:#e6e6e6;border-top:1.3px solid #bcbcbc;"></div>
<svg style="left:151px;top:1158px" width="8" height="12" viewBox="0 0 8 12"><path d="M7.500.8v10.400L1 6z" fill="#c6c6c6"/></svg>
<svg style="left:191px;top:1158px" width="8" height="12" viewBox="0 0 8 12"><path d="M.5.8v10.400L7 6z" fill="#c6c6c6"/></svg>
<div class="a" style="left:254.5px;top:1145px;width:127px;height:34.5px;background:#fff;border-left:1px solid #c9c9c9;border-right:1px solid #c9c9c9;border-bottom:2.6px solid #217346;"></div>
<div class="a t " style="top:1151.1px;font-size:17.6px;line-height:23px;color:#217346;font-weight:700;left:-181.50px;width:1000px;text-align:center;transform:scaleX(1.02);transform-origin:center center;">BreakBack</div>
<div class="a t " style="top:1150.6px;font-size:18.2px;line-height:24px;color:#5a5a5a;left:-61.00px;width:1000px;text-align:center;transform:scaleX(1.03);transform-origin:center center;">Directions</div>
<div class="a" style="left:504.5px;top:1151px;width:1.3px;height:27px;background:#b9b9b9;"></div>
<div class="a" style="left:1294.5px;top:1159px;width:2px;height:2px;background:#b5b5b5;"></div>
<div class="a" style="left:1294.5px;top:1164px;width:2px;height:2px;background:#b5b5b5;"></div>
<div class="a" style="left:1294.5px;top:1169px;width:2px;height:2px;background:#b5b5b5;"></div>
<div class="a" style="left:1316px;top:1155px;width:798px;height:20px;background:#dadada;"></div>
<div class="a" style="left:1316px;top:1155px;width:20px;height:20px;background:#fff;border:1px solid #bdbdbd;"></div>
<div class="a" style="left:1336px;top:1155px;width:316px;height:20px;background:#fff;border:1px solid #bdbdbd;"></div>
<div class="a" style="left:2094px;top:1155px;width:20px;height:20px;background:#fff;border:1px solid #bdbdbd;"></div>
<svg style="left:1322px;top:1159.500px" width="7" height="11" viewBox="0 0 7 11"><path d="M6.500.5v10L.8 5.500z" fill="#6e6e6e"/></svg>
<svg style="left:2101px;top:1159.500px" width="7" height="11" viewBox="0 0 7 11"><path d="M.5.5v10L6.200 5.500z" fill="#6e6e6e"/></svg>
<div class="a" style="left:116px;top:1184px;width:2029px;height:38px;background:#2f3645;"></div>
<div class="a t " style="top:1190.8px;font-size:21.8px;line-height:28px;color:#e6e6e6;left:958.00px;">Spreading and Line item details</div>
<svg style="left:1277px;top:1196px" width="18" height="12" viewBox="0 0 18 12"><path d="M2 10.400L9 3.400l7 7" fill="none" stroke="#fff" stroke-width="3.700"/></svg>
<svg style="left:0;top:0" width="90" height="800" viewBox="0 0 90 800"><path d="M13 44.400L50.600 28.700 40.800 47.600C33 44 22 43.300 13 44.400z" fill="#1f7bd0"/><path d="M50.600 28.700L68.200 48C59 44.300 50 44.500 40.800 47.600z" fill="#9acb3c"/><path d="M41 102.600L54.200 114.500V128.800H28.500V114.500z" fill="#fff"/><rect x="31.300" y="116.300" width="8.300" height="4.800" fill="#2f3843"/><rect x="42.100" y="116.300" width="6.700" height="12.600" fill="#2f3843"/><path d="M25 112.800L41 98.200 57.200 112.800" fill="none" stroke="#3f86c9" stroke-width="4" stroke-linecap="butt"/><g transform="translate(23.7 173) rotate(0)"><rect x="0" y="0" width="9.600" height="31" rx="1" fill="#fff"/><rect x="2.100" y="2.600" width="5.400" height="12.300" fill="#2f3843"/><rect x="2.100" y="2.600" width="5.400" height="3" fill="#3f86c9"/><circle cx="4.800" cy="24.600" r="2" fill="#2f3843"/></g><g transform="translate(33.9 173) rotate(0)"><rect x="0" y="0" width="9.600" height="31" rx="1" fill="#fff"/><rect x="2.100" y="2.600" width="5.400" height="12.300" fill="#2f3843"/><rect x="2.100" y="2.600" width="5.400" height="3" fill="#3f86c9"/><circle cx="4.800" cy="24.600" r="2" fill="#2f3843"/></g><g transform="translate(44.6 174.2) rotate(-12)"><rect x="0" y="0" width="9.600" height="31" rx="1" fill="#fff"/><rect x="2.100" y="2.600" width="5.400" height="12.300" fill="#2f3843"/><rect x="2.100" y="2.600" width="5.400" height="3" fill="#3f86c9"/><circle cx="4.800" cy="24.600" r="2" fill="#2f3843"/></g><rect x="29.700" y="250.700" width="22.700" height="27" rx="2.200" fill="#2f3843" stroke="#fff" stroke-width="2.400"/><path d="M32.800 252.500v-3.800c0-1 .8-1.800 1.800-1.800h3.200c.3-2 1.600-3.600 3.500-3.600s3.200 1.600 3.500 3.600h3.200c1 0 1.800.8 1.800 1.800v3.800z" fill="#fff"/><rect x="35" y="248.300" width="12.500" height="2.300" fill="#a9b0b8"/><path d="M35.600 259.8L39.700 263.6 47.800 255.6" fill="none" stroke="#3f86c9" stroke-width="3.300"/><path d="M35.600 269.8L39.700 273.6 47.800 265.6" fill="none" stroke="#3f86c9" stroke-width="3.300"/><rect x="27.400" y="321.300" width="27.600" height="32" fill="none" stroke="#fff" stroke-width="2.600"/><rect x="30.900" y="324.400" width="20.300" height="4.800" fill="#fff"/><path d="M34.500 333.700V347.800L48.200 340.700z" fill="#3f86c9"/><rect x="28.500" y="394.700" width="25.500" height="35.500" rx="3" fill="#fff"/><rect x="31.700" y="398.300" width="18.900" height="5.400" fill="#3f86c9"/><circle cx="35" cy="410.8" r="2.450" fill="#2f3843"/><circle cx="35" cy="417.2" r="2.450" fill="#2f3843"/><circle cx="35" cy="423.7" r="2.450" fill="#2f3843"/><circle cx="41.3" cy="410.8" r="2.450" fill="#2f3843"/><circle cx="41.3" cy="417.2" r="2.450" fill="#2f3843"/><circle cx="41.3" cy="423.7" r="2.450" fill="#2f3843"/><circle cx="47.6" cy="410.8" r="2.450" fill="#2f3843"/><circle cx="47.6" cy="417.2" r="2.450" fill="#2f3843"/><circle cx="47.6" cy="423.7" r="2.450" fill="#2f3843"/><circle cx="40.900" cy="487.500" r="14" fill="none" stroke="#3f86c9" stroke-width="2.600"/><path d="M24.100 480H32.500L36.500 484V496H24.100z" fill="#2f3843" stroke="#2f3843" stroke-width="5"/><path d="M24.100 480H32.500L36.500 484V496H24.100z" fill="#2f3843" stroke="#fff" stroke-width="2"/><path d="M32 480v4.500h4.500" fill="none" stroke="#fff" stroke-width="1.600"/><circle cx="52.500" cy="483.800" r="5.100" fill="#2f3843" stroke="#2f3843" stroke-width="3.400"/><path d="M46.300 496.400c0-4 2.500-6.600 4.200-7 .5.500 1.200.800 2 .800s1.500-.3 2-.800c1.700.4 4.200 3 4.200 7z" fill="#2f3843" stroke="#2f3843" stroke-width="3.400"/><circle cx="52.500" cy="483.800" r="5.100" fill="#fff"/><path d="M46.300 496.400c0-4 2.500-6.600 4.200-7 .5.500 1.200.800 2 .800s1.500-.3 2-.800c1.700.4 4.200 3 4.200 7z" fill="#fff"/><rect x="35.900" y="547" width="10.600" height="6.800" rx="1.200" fill="none" stroke="#fff" stroke-width="2.300"/><rect x="35.900" y="560.1" width="10.600" height="6.800" rx="1.200" fill="none" stroke="#fff" stroke-width="2.300"/><rect x="35.900" y="573.3" width="10.600" height="6.800" rx="1.200" fill="none" stroke="#fff" stroke-width="2.300"/><path d="M32.500 560.500c-4-.5-6.500-2.500-6-5 .4-1.800 2.500-2.300 4.500-1.800" fill="none" stroke="#3f86c9" stroke-width="2"/><path d="M29.500 551.500l3 2.800-3.700 2z" fill="#3f86c9"/><path d="M50.500 567c4 .5 6.500 2.500 6 5-.4 1.800-2.500 2.300-4.500 1.800" fill="none" stroke="#3f86c9" stroke-width="2"/><path d="M53.500 576l-3-2.800 3.700-2z" fill="#3f86c9"/><path d="M38.300 645.200L28.600 653.200" stroke="#3f86c9" stroke-width="6" stroke-linecap="round"/><path d="M47.500 636.500L39.500 644" stroke="#fff" stroke-width="4.600"/><path d="M42.300 628.600C43.800 624.700 49 622.900 53 624.400L60.300 631.600 55.800 636.100 52.300 632.700 49.700 635.300 51.200 637.200 47.600 640.300 42.600 634.800 46.200 631.200C45.200 629.700 43.900 628.800 42.300 628.600Z" fill="#fff"/><path d="M33 633L51.300 650.200" stroke="#2f3843" stroke-width="9.500" stroke-linecap="butt"/><path d="M32 632L51.300 650.200" stroke="#fff" stroke-width="6.600" stroke-linecap="butt"/><circle cx="51.300" cy="650.200" r="5.500" fill="#fff"/><circle cx="51.300" cy="650.200" r="2.200" fill="#2f3843"/><circle cx="30" cy="630" r="8.300" fill="#fff"/><path d="M30.800 630.800L20 620" stroke="#2f3843" stroke-width="5.800" stroke-linecap="round"/><path d="M43.66 726.03L43.30 730.45L38.90 730.45L38.54 726.03L35.33 724.86L32.21 728.02L28.84 725.19L31.41 721.57L29.70 718.61L25.28 719.02L24.51 714.70L28.81 713.57L29.40 710.20L25.75 707.67L27.95 703.87L31.96 705.77L34.58 703.57L33.41 699.29L37.54 697.79L39.39 701.82L42.81 701.82L44.66 697.79L48.79 699.29L47.62 703.57L50.24 705.77L54.25 703.87L56.45 707.67L52.80 710.20L53.39 713.57L57.69 714.70L56.92 719.02L52.50 718.61L50.79 721.57L53.36 725.19L49.99 728.02L46.87 724.86ZM50.20 714.00A9.1 9.1 0 1 0 32.00 714.00A9.1 9.1 0 1 0 50.20 714.00Z" fill="#fff" fill-rule="evenodd" stroke="#fff" stroke-width="2.500" stroke-linejoin="round"/></svg>
</div></div></div></body></html>
